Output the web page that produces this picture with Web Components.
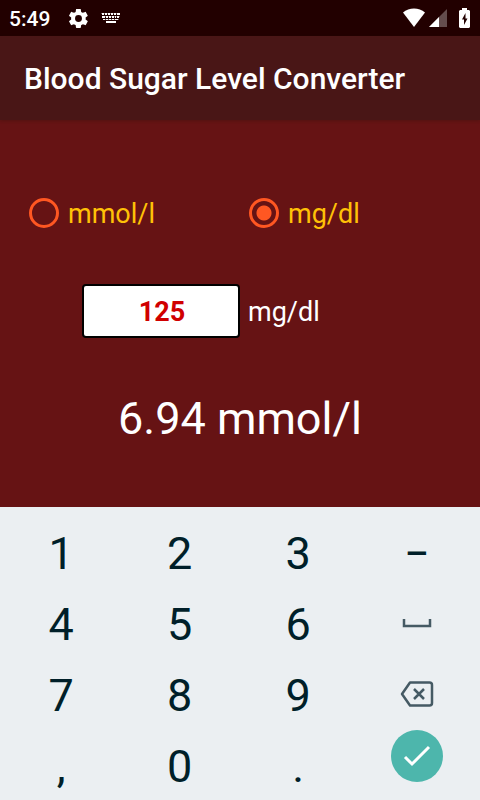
<!DOCTYPE html>
<html lang="en">
<head>
<meta charset="utf-8">
<meta name="viewport" content="width=device-width, initial-scale=1">
<title>Blood Sugar Level Converter</title>
<style>
html, body { margin: 0; height: 100%; }
body { font-family: Roboto, "Noto Sans", sans-serif; color: #fff; background: #661314; }
</style>
</head>
<body>
<converter-app></converter-app>
<script>
function define(name, markup, setup) {
  const template = document.createElement('template');
  template.innerHTML = markup;
  customElements.define(name, class extends HTMLElement {
    connectedCallback() {
      if (this.shadowRoot) return;
      this.attachShadow({ mode: 'open' }).append(template.content.cloneNode(true));
      if (setup) setup(this, this.shadowRoot);
    }
  });
}

define('status-bar', `
<style>
:host { display: flex; align-items: center; height: 36px; padding: 0 10px 0 9px; background: #220000; box-sizing: border-box; }
time { font-size: 21px; line-height: 24px; font-weight: 500; margin-right: 17px; padding-top: 1px; }
svg { display: block; fill: #fff; flex: none; }
.gear { margin-right: 11px; }
.wifi { margin-left: auto; margin-right: 4px; }
.signal { margin-right: 12px; }
</style>
<time>5:49</time>
<svg class="gear" width="23" height="23" viewBox="0 0 24 24"><path d="M19.4 13c0-.3.1-.6.1-1s0-.7-.1-1l2.1-1.600c.2-.2.2-.4.1-.6l-2-3.500c-.1-.2-.4-.3-.6-.2l-2.500 1c-.5-.4-1.100-.7-1.700-1l-.4-2.600c0-.2-.2-.4-.5-.4h-4c-.2 0-.5.2-.5.4l-.4 2.600c-.6.3-1.200.6-1.700 1l-2.500-1c-.2-.1-.5 0-.6.200l-2 3.500c-.1.2-.1.5.1.6l2.100 1.600c0 .3-.1.7-.1 1s0 .7.1 1l-2.100 1.600c-.2.2-.2.4-.1.600l2 3.500c.1.200.4.300.600.200l2.500-1c.5.4 1.100.7 1.700 1l.4 2.600c0 .2.200.4.5.4h4c.2 0 .5-.2.5-.4l.4-2.600c.6-.3 1.200-.6 1.700-1l2.500 1c.2.100.5 0 .6-.2l2-3.500c.1-.2.1-.5-.1-.600zM12 15.600a3.600 3.600 0 1 1 0-7.200 3.600 3.600 0 0 1 0 7.200z"/></svg>
<svg width="20" height="12" viewBox="0 0 20 12"><path d="M0 1h19v1H0zM1 4h18v1H1zM2 7h16v1H2z" opacity=".35"/><path d="M1 1h2v2H1zM4 1h2v2H4zM7 1h2v2H7zM10 1h2v2h-2zM13 1h2v2h-2zM16 1h3v2h-3zM1 4h3v2H1zM5 4h2v2H5zM8 4h2v2H8zM11 4h2v2h-2zM14 4h1v2h-1zM16 4h2v2h-2zM2 7h2v1H2zM5 7h2v1H5zM8 7h2v1H8zM11 7h2v1h-2zM14 7h3v1h-3zM5 9h10v2H5z"/></svg>
<svg class="wifi" width="22" height="20" viewBox="0 0 22 20"><path d="M0 4.500C6-.7 16-.7 22 4.500L11 19z"/></svg>
<svg class="signal" width="18" height="18" viewBox="0 0 18 18"><path d="M18 0v18H0z" opacity=".3"/><path d="M10 8v10H0z"/></svg>
<svg width="11" height="20" viewBox="0 0 11 20"><path fill-rule="evenodd" d="M3 0h5v2h2l1 1v16l-1 1H1l-1-1V3l1-1h2zM6.500 5L3 11.500h2V17l3.500-6.500h-2z"/></svg>
`);

define('app-bar', `
<style>
:host { display: flex; align-items: center; height: 84px; padding: 2px 24px 0; box-sizing: border-box; background: #491616; box-shadow: 0 1px 3px rgba(40,20,10,.3); position: relative; }
h1 { margin: 0; font-size: 30px; line-height: 36px; font-weight: 500; }
</style>
<h1><slot></slot></h1>
`);

define('unit-choice', `
<style>
:host { display: block; }
fieldset { display: grid; grid-template-columns: 1fr 1fr; border: 0; margin: 0; padding: 0; }
label { display: flex; align-items: center; gap: 9px; padding-left: 9px; font-size: 27px; line-height: 32px; color: #ffc107; }
span { padding-top: 2px; }
input { appearance: none; flex: none; box-sizing: border-box; width: 30px; height: 30px; margin: 0; border: 3px solid #ff5722; border-radius: 50%; }
input:checked { background: radial-gradient(circle, #ff5722 7px, transparent 8px); }
</style>
<fieldset aria-label="Unit">
<label><input type="radio" name="unit" value="mmol"><span>mmol/l</span></label>
<label><input type="radio" name="unit" value="mg" checked><span>mg/dl</span></label>
</fieldset>
`);

define('value-field', `
<style>
:host { display: flex; align-items: center; gap: 8px; }
input { box-sizing: border-box; width: 158px; height: 54px; margin: 0; padding: 2px 0 0 2px; border: 2px solid #000; border-radius: 4px; background: #fff; color: #d00000; font: 700 27px/32px Roboto, "Noto Sans", sans-serif; text-align: center; outline: 0; }
label { padding-top: 2px; font-size: 27px; line-height: 32px; }
</style>
<input id="value" type="text" inputmode="decimal" value="125">
<label for="value"><slot></slot></label>
`);

define('result-text', `
<style>
:host { display: block; text-align: center; }
output { font-size: 45px; line-height: 52px; }
</style>
<output><slot></slot></output>
`);

define('pad-key', `
<style>
:host { display: grid; }
button { display: flex; align-items: center; justify-content: center; border: 0; margin: 0; padding: 4px 0 0; background: none; color: #001f29; font: 400 45px/52px Roboto, "Noto Sans", sans-serif; }
:host([name]) button { padding-top: 0; }
</style>
<button type="button"><slot></slot></button>
`, (host, root) => {
  const name = host.getAttribute('name');
  if (name) root.querySelector('button').setAttribute('aria-label', name);
});

define('enter-key', `
<style>
:host { display: flex; align-items: flex-start; justify-content: center; padding-top: 1px; }
button { display: grid; place-items: center; width: 52px; height: 52px; padding: 0; border: 0; border-radius: 50%; background: #4db6ac; }
</style>
<button type="button" aria-label="Done"><svg width="28" height="22" viewBox="0 0 28 22" fill="none" stroke="#fff" stroke-width="3"><path d="M2 12l7 7L26 2"/></svg></button>
`);

define('number-pad', `
<style>
:host { display: grid; grid-template-columns: repeat(4, 1fr); grid-auto-rows: 71px; padding: 9px 4px 0 2px; background: #ebeff2; }
svg { display: block; fill: none; stroke: #455a64; }
</style>
<pad-key>1</pad-key><pad-key>2</pad-key><pad-key>3</pad-key><pad-key>−</pad-key>
<pad-key>4</pad-key><pad-key>5</pad-key><pad-key>6</pad-key>
<pad-key name="Space"><svg width="30" height="10" viewBox="0 0 30 10" stroke-width="2.500"><path d="M2 1v7h26V1"/></svg></pad-key>
<pad-key>7</pad-key><pad-key>8</pad-key><pad-key>9</pad-key>
<pad-key name="Delete"><svg width="34" height="28" viewBox="0 0 34 28" stroke-width="2.500"><path stroke-linejoin="round" d="M10 2.500h19.500q2.500 0 2.500 2.500v18q0 2.500-2.500 2.500H10L2 14z"/><path d="M14 9l10 10M24 9L14 19"/></svg></pad-key>
<pad-key>,</pad-key><pad-key>0</pad-key><pad-key>.</pad-key><enter-key></enter-key>
`);

define('converter-app', `
<style>
:host { display: flex; flex-direction: column; min-height: 100vh; }
main { flex: 1; display: flex; flex-direction: column; padding: 76px 20px 0; }
value-field { margin: 54px 0 0 62px; }
result-text { margin-top: 55px; }
</style>
<status-bar></status-bar>
<app-bar>Blood Sugar Level Converter</app-bar>
<main>
<unit-choice></unit-choice>
<value-field>mg/dl</value-field>
<result-text>6.94 mmol/l</result-text>
</main>
<number-pad></number-pad>
`);
</script>
</body>
</html>
